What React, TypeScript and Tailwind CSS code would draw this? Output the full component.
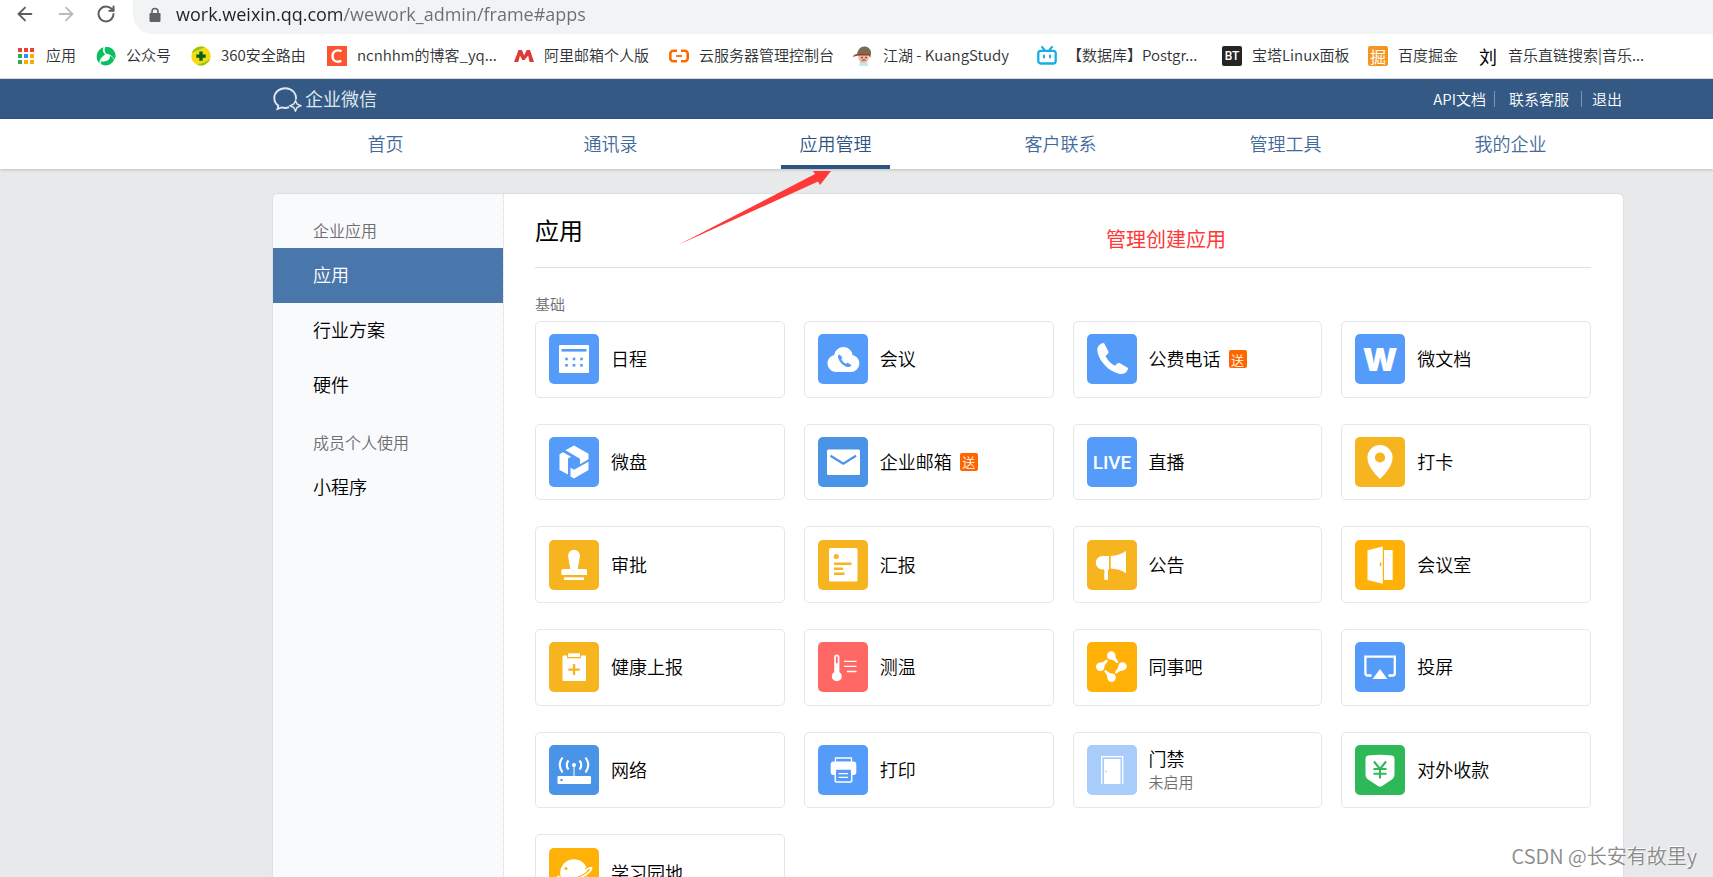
import type { ReactNode } from "react";
import { ArrowLeft, ArrowRight, RotateCw } from "lucide-react";

const BLUE = "#559cfa";
const DEEP = "#4a94e8";
const GOLD = "#f6b51e";
const AMBER = "#ffb107";

function Tile({ bg, children }: { bg: string; children: ReactNode }) {
  return (
    <svg viewBox="0 0 50 50" className="size-[50px] shrink-0" fill="#fff" aria-hidden="true">
      <rect width="50" height="50" rx="5" fill={bg} />
      {children}
    </svg>
  );
}

const icons: Record<string, ReactNode> = {
  calendar: (
    <Tile bg={BLUE}>
      <rect x="10" y="11" width="30" height="28" rx="1" />
      <rect x="12.5" y="15" width="25" height="2.6" fill={BLUE} />
      {[17.5, 25, 32.5].map((x) => (
        <g key={x} fill={BLUE}>
          <rect x={x - 1.3} y="23.7" width="2.6" height="2.6" />
          <rect x={x - 1.3} y="30" width="2.6" height="2.6" />
        </g>
      ))}
    </Tile>
  ),
  meeting: (
    <Tile bg={BLUE}>
      <path d="M18 38a8.6 8.6 0 0 1-1.8-17 9.3 9.3 0 0 1 18.4 0A8.6 8.6 0 0 1 33 38z" />
      <path
        d="M21.6 20.4c-1.4.4-2 1.7-1.4 3.6 1.3 4.2 5 8 9.3 9 2 .3 3.4-.5 3.8-2l-3.6-2.3-2 1c-2-.9-3.6-2.6-4.3-4.6l1-1.5z"
        fill={BLUE}
      />
    </Tile>
  ),
  phone: (
    <Tile bg={BLUE}>
      <path d="M16 9c-3.6 1-5.900 4-5.700 7.400C11.500 27 23 38.800 34 39.900c3.500.2 6-1.600 7-4.900.1-.6 0-1-.4-1.300L33 29.200c-1-.5-2-.4-2.800.4L28 31.800c-4-2-7.700-5.700-9.400-9.800l2.200-2.200c.8-.9.900-1.900.4-2.900L17.300 9.500c-.3-.5-.7-.7-1.300-.5z" />
    </Tile>
  ),
  doc: (
    <Tile bg={BLUE}>
      <text x="25" y="36.5" textAnchor="middle" className="font-['Inter',sans-serif] text-[32px] font-black">
        W
      </text>
    </Tile>
  ),
  drive: (
    <Tile bg={BLUE}>
      <path d="M16.500 13.300 25 8.500l14.500 8.300v5.400L31 27.200v-5.500z" />
      <path d="m14 15.200 8 4.600-3 1.800v16L10.500 33V17.300z" />
      <path d="m39.500 24.800v8.200L25 41.500l-3.500-2v-8.700l3.500 2z" />
    </Tile>
  ),
  mail: (
    <Tile bg={DEEP}>
      <rect x="9" y="12.5" width="33" height="25.5" rx="1.5" />
      <path d="m12.500 18.700 12.800 8 12.700-8" fill="none" stroke={DEEP} strokeWidth="2.2" />
    </Tile>
  ),
  live: (
    <Tile bg={BLUE}>
      <text x="25" y="32" textAnchor="middle" className="font-['Roboto',sans-serif] text-[19px] font-medium">
        LIVE
      </text>
    </Tile>
  ),
  pin: (
    <Tile bg={GOLD}>
      <path
        fillRule="evenodd"
        d="M25 8a12.600 12.600 0 0 0-12.600 12.600C12.400 29 20 37 25 42c5-5 12.600-13 12.600-21.400A12.600 12.600 0 0 0 25 8zm0 7.400a5.100 5.100 0 1 1 0 10.200 5.100 5.100 0 0 1 0-10.200z"
      />
    </Tile>
  ),
  stamp: (
    <Tile bg={GOLD}>
      <path d="M25 9.700a6 6 0 0 0-5.900 6.600L21.300 29H14a1.600 1.600 0 0 0-1.600 1.600V35H38v-4.400a1.600 1.600 0 0 0-1.600-1.600h-7.700l2.200-12.700A6 6 0 0 0 25 9.700z" />
      <rect x="15" y="37.3" width="20" height="2.7" />
    </Tile>
  ),
  report: (
    <Tile bg={GOLD}>
      <rect x="11" y="8" width="28.5" height="33.5" rx="1.5" />
      <g fill={GOLD}>
        <circle cx="18.3" cy="16.6" r="2.5" />
        <rect x="16" y="22.5" width="17.5" height="2.5" />
        <rect x="16" y="27.5" width="9" height="2.5" />
        <rect x="16" y="32.5" width="10.5" height="2.5" />
      </g>
    </Tile>
  ),
  horn: (
    <Tile bg={GOLD}>
      <path d="M22 16h-6.500a6.800 6.800 0 0 0 0 13.600H17.300V39a1 1 0 0 0 1 1H20a1 1 0 0 0 1-1v-9.400h1z" />
      <path d="M23.700 16c6-.3 11-2 15.300-5v22.200c-4.300-3-9.300-4.300-15.300-4.600z" />
    </Tile>
  ),
  room: (
    <Tile bg={AMBER}>
      <path d="m12.500 10.300 15.300-3.900v37.400L12.500 40z" />
      <path d="M29 10h8.700v30H29z" />
      <rect x="24.8" y="22.5" width="1.5" height="4" rx=".7" fill={AMBER} />
    </Tile>
  ),
  health: (
    <Tile bg={GOLD}>
      <rect x="13.5" y="13.5" width="23.5" height="25.5" rx="1" />
      <rect x="18" y="10.5" width="14" height="5.8" fill={GOLD} />
      <rect x="19" y="11.3" width="12" height="3.7" />
      <path d="M23.900 22h2.300v4.400h4.500v2.300h-4.500V33h-2.300v-4.300h-4.500v-2.300h4.500z" fill={GOLD} />
    </Tile>
  ),
  thermo: (
    <Tile bg="#ff6765">
      <path d="M16.200 30V15a2.600 2.600 0 0 1 5.200 0v15a5 5 0 1 1-5.200 0z" />
      <rect x="17.9" y="14.5" width="1.8" height="6.8" fill="#ff6765" />
      <path d="M26 19.400h12.500M26 24.400h12.500M29 29.500h9.500" stroke="#fff" strokeWidth="1.3" />
    </Tile>
  ),
  circle: (
    <Tile bg={AMBER}>
      {[0, 90, 180, 270].map((a) => (
        <path
          key={a}
          transform={`rotate(${a} 24.4 24.6)`}
          d="M20 13.400a4.200 4.200 0 0 1 8.400 0c0 2 .8 3.500 2.600 5.600a1.200 1.200 0 0 1-1.700 1.700c-1.900-1.700-3.200-2.600-5.200-3.100a4.200 4.200 0 0 1-4.100-4.200z"
        />
      ))}
    </Tile>
  ),
  cast: (
    <Tile bg={BLUE}>
      <path
        d="M16.500 33.500h-4A2 2 0 0 1 10.400 31.500V14.700h29.400v16.800a2 2 0 0 1-2 2h-4.300"
        fill="none"
        stroke="#fff"
        strokeWidth="2.3"
      />
      <path d="m25 27 7.300 10H17.700z" />
    </Tile>
  ),
  router: (
    <Tile bg={DEEP}>
      <rect x="8.5" y="31" width="33.5" height="8" rx="1.2" />
      <circle cx="12.5" cy="35" r="1.2" fill={DEEP} />
      <circle cx="25" cy="20" r="2" />
      <path d="M25 21v10" stroke="#fff" strokeWidth="1" />
      <path
        d="M13.500 12.500q-5.500 7.500 0 15M19.500 15.500q-3.500 4.500 0 9M30.500 15.500q3.500 4.500 0 9M36.500 12.500q5.500 7.500 0 15"
        fill="none"
        stroke="#fff"
        strokeWidth="2.1"
      />
    </Tile>
  ),
  printer: (
    <Tile bg={BLUE}>
      <path d="M17.500 17v-4h16v4" fill="none" stroke="#fff" strokeWidth="1.3" />
      <path d="M15.500 16.400h20a2.800 2.800 0 0 1 2.800 2.800v8a2.800 2.800 0 0 1-2.800 2.800h-20a2.800 2.800 0 0 1-2.800-2.800v-8a2.800 2.800 0 0 1 2.800-2.800z" />
      <rect x="17.3" y="24" width="16.4" height="13" rx="1" fill={BLUE} stroke="#fff" strokeWidth="1.5" />
      <path d="M20.500 28.700h9.500M20.500 32.300h9.500" stroke="#fff" strokeWidth="1.2" />
    </Tile>
  ),
  door: (
    <Tile bg="#a9cdfb">
      <path d="M14.700 39V11.600h21V39" fill="none" stroke="#fff" strokeWidth="1.3" />
      <rect x="17" y="14" width="16.5" height="25" />
      <rect x="18.5" y="25.5" width="1.2" height="1.8" fill="#a9cdfb" />
    </Tile>
  ),
  pay: (
    <Tile bg="#2fb857">
      <path d="M13 10.600c8-1.300 16-1.300 24 0a3 3 0 0 1 2.500 3V29c0 3-1.200 4.300-3 5.700l-9.300 6.300c-1.600 1-2.600 1-4.200 0l-9.500-6.300c-1.800-1.400-3-2.700-3-5.700V13.600a3 3 0 0 1 2.500-3z" />
      <path d="m19 16.500 6 7.500 6-7.500M25 24v9.500M18.500 24h13M18.500 28.700h13" fill="none" stroke="#2fb857" strokeWidth="2.1" />
    </Tile>
  ),
  planet: (
    <Tile bg={AMBER}>
      <circle cx="25" cy="25" r="13.8" />
      <circle cx="17" cy="20.5" r="1.5" fill={AMBER} />
      <path d="M37 22c4-2.500 6-3 5.500-1.500-1.500 5-12 11-22 12.500-9 1.300-14 0-13.500-2 .3-1 1.500-2 3.500-3" fill="none" stroke={AMBER} strokeWidth="4" />
      <path d="M37 22c4-2.500 6-3 5.500-1.500-1.500 5-12 11-22 12.500-9 1.300-14 0-13.500-2 .3-1 1.500-2 3.500-3" fill="none" stroke="#fff" strokeWidth="1.6" />
    </Tile>
  ),
};

const apps: { name: string; icon: string; gift?: boolean; note?: string }[] = [
  { name: "日程", icon: "calendar" },
  { name: "会议", icon: "meeting" },
  { name: "公费电话", icon: "phone", gift: true },
  { name: "微文档", icon: "doc" },
  { name: "微盘", icon: "drive" },
  { name: "企业邮箱", icon: "mail", gift: true },
  { name: "直播", icon: "live" },
  { name: "打卡", icon: "pin" },
  { name: "审批", icon: "stamp" },
  { name: "汇报", icon: "report" },
  { name: "公告", icon: "horn" },
  { name: "会议室", icon: "room" },
  { name: "健康上报", icon: "health" },
  { name: "测温", icon: "thermo" },
  { name: "同事吧", icon: "circle" },
  { name: "投屏", icon: "cast" },
  { name: "网络", icon: "router" },
  { name: "打印", icon: "printer" },
  { name: "门禁", icon: "door", note: "未启用" },
  { name: "对外收款", icon: "pay" },
  { name: "学习园地", icon: "planet" },
];

function Fav({ children }: { children: ReactNode }) {
  return (
    <svg viewBox="0 0 20 20" className="size-5 shrink-0" aria-hidden="true">
      {children}
    </svg>
  );
}

const bookmarks: { label: string; width: string; icon: ReactNode }[] = [
  {
    label: "应用",
    width: "w-[80px]",
    icon: (
      <Fav>
        {["#ea4335", "#ea4335", "#ea4335", "#34a853", "#4285f4", "#fbab05", "#34a853", "#fbab05", "#fbab05"].map((c, i) => (
          <rect key={i} x={2 + (i % 3) * 6} y={2 + Math.floor(i / 3) * 6} width="4" height="4" fill={c} />
        ))}
      </Fav>
    ),
  },
  {
    label: "公众号",
    width: "w-[95px]",
    icon: (
      <Fav>
        <g fill="#07c160">
          <path d="M7.500 1.200C2.500 3 .2 7.500.8 12.200c.3 2 1.200 3.600 2.600 5 .2-3.700 1.600-6.200 5.800-8.700C6.800 6 6.300 4 7.500 1.200z" />
          <path d="M9.200 1.100C13.800.2 18 3 19.200 7.300c.6 2.300.4 4.300-.7 6.200-1.900-3.300-4.400-5-8.600-5.900C8.600 5.500 8.300 3.300 9.200 1.100z" />
          <path d="M4.700 18c3.800 2.300 8.500 1.700 11.500-1.200 1-1 1.600-2 1.800-3-1-1.900-2.200-3.200-4-4 .2 3.500-1.800 5.900-8.700 5.700-.4.700-.6 1.500-.6 2.500z" />
        </g>
      </Fav>
    ),
  },
  {
    label: "360安全路由",
    width: "w-[136px]",
    icon: (
      <Fav>
        <circle cx="10" cy="10" r="9.7" fill="#f5dc10" />
        <path d="M1 7A9.700 9.700 0 0 1 14 1.200C9 3 5 5 1 7zM19 13A9.700 9.700 0 0 1 6 18.800c5-1.200 9-3 13-5.800z" fill="#8cc91c" />
        <path d="M8.300 5.500h3.400v3h3v3.200h-3v3H8.300v-3h-3V8.500h3z" fill="#075e20" />
      </Fav>
    ),
  },
  {
    label: "ncnhhm的博客_yq...",
    width: "w-[187px]",
    icon: (
      <Fav>
        <rect width="20" height="20" fill="#fc5531" />
        <path d="M14.500 5.300c-4.500-2.300-9-.2-9 4.700s4 7 8.800 4.900" fill="none" stroke="#fff" strokeWidth="2.3" />
      </Fav>
    ),
  },
  {
    label: "阿里邮箱个人版",
    width: "w-[155px]",
    icon: (
      <Fav>
        <path d="M0 16 4.500 4h3.300l2.300 5.500L12.700 4H16l4 12h-4.500l-1.300-6.500L10.500 14H8.300L6 9.500 4.300 16z" fill="#dd3a35" />
      </Fav>
    ),
  },
  {
    label: "云服务器管理控制台",
    width: "w-[184px]",
    icon: (
      <Fav>
        <g fill="none" stroke="#ff6a00" strokeWidth="2.6">
          <path d="M8 4.800H4.300a3 3 0 0 0-3 3v4.400a3 3 0 0 0 3 3H8M12 4.800h3.700a3 3 0 0 1 3 3v4.400a3 3 0 0 1-3 3H12" />
          <path d="M7 10h6" strokeWidth="1.8" />
        </g>
      </Fav>
    ),
  },
  {
    label: "江湖 - KuangStudy",
    width: "w-[184px]",
    icon: (
      <Fav>
        <path d="M7 15h7l1 5H6z" fill="#bfe9f5" />
        <circle cx="10.5" cy="11.5" r="5.2" fill="#f2b596" />
        <path d="M4 8c1-5 4-8 8-7.500S18.500 4 18 8l-.8 4-2-3.500H8L0 11C0 9 2 8.300 4 8z" fill="#7c6a52" />
        <path d="M4 8h13v1.500H3z" fill="#963c32" />
        <circle cx="9" cy="11.5" r=".8" fill="#333" />
        <circle cx="13" cy="11.5" r=".8" fill="#333" />
        <path d="M9 14h3.500" stroke="#a03030" />
      </Fav>
    ),
  },
  {
    label: "【数据库】Postgr...",
    width: "w-[185px]",
    icon: (
      <Fav>
        <rect x="1.3" y="4.8" width="17.4" height="12.7" rx="2.5" fill="none" stroke="#18aee5" strokeWidth="2.3" />
        <path d="m5 1 2.500 3M15 1l-2.500 3M7 9.500v2M13 9.500v2" stroke="#18aee5" strokeWidth="2" strokeLinecap="round" />
      </Fav>
    ),
  },
  {
    label: "宝塔Linux面板",
    width: "w-[146px]",
    icon: (
      <span className="grid size-5 shrink-0 place-items-center rounded-[2px] bg-[#252525] font-['Roboto',sans-serif] text-[12px] leading-none font-medium text-white">
        BT
      </span>
    ),
  },
  {
    label: "百度掘金",
    width: "w-[110px]",
    icon: (
      <span className="grid size-5 shrink-0 place-items-center rounded-[2px] bg-[#f7941d] text-[16px] leading-none font-normal text-white">
        掘
      </span>
    ),
  },
  {
    label: "音乐直链搜索|音乐...",
    width: "w-[170px]",
    icon: <span className="grid size-5 shrink-0 place-items-center text-[18px] leading-none font-normal text-black">刘</span>,
  },
];

const tabs = ["首页", "通讯录", "应用管理", "客户联系", "管理工具", "我的企业"];

function SideLink({ label, active }: { label: string; active?: boolean }) {
  return (
    <a
      href="#"
      className={
        active
          ? "flex h-[55px] items-center bg-[#4a77ab] pb-0.5 pl-10 text-[18px] text-white"
          : "flex h-[55px] items-center pb-0.5 pl-10 text-[18px] text-black"
      }
    >
      {label}
    </a>
  );
}

export default function App() {
  return (
    <div className="relative flex h-screen flex-col overflow-hidden bg-[#e7e9eb] font-['Noto_Sans_CJK_SC',sans-serif] font-[350]">
      <div className="flex h-[34px] shrink-0 items-start bg-white">
        <div className="flex h-[28px] w-[133px] shrink-0 items-center gap-[19px] pl-[14px] text-[#5a5d61]">
          <button type="button" aria-label="后退">
            <ArrowLeft className="size-[22px]" strokeWidth={2} />
          </button>
          <button type="button" aria-label="前进" className="text-[#b9bbbe]">
            <ArrowRight className="size-[22px]" strokeWidth={2} />
          </button>
          <button type="button" aria-label="刷新">
            <RotateCw className="size-5" strokeWidth={2.4} />
          </button>
        </div>
        <div className="flex h-[34px] flex-1 items-start gap-[15px] rounded-bl-[20px] bg-[#f1f3f4] pl-4">
          <svg viewBox="0 0 12 16" className="mt-[7px] h-4 w-3 shrink-0" aria-hidden="true">
            <path d="M3 7V4.500a3 3 0 0 1 6 0V7" fill="none" stroke="#5f6368" strokeWidth="1.6" />
            <rect x=".5" y="6" width="11" height="9" rx="1.2" fill="#5f6368" />
          </svg>
          <input
            aria-label="地址"
            defaultValue="work.weixin.qq.com/wework_admin/frame#apps"
            className="h-[28px] flex-1 bg-[linear-gradient(90deg,#202124_166px,#6a6e72_166px)] bg-clip-text font-['Open_Sans',sans-serif] text-[18px] font-normal text-transparent outline-none"
          />
        </div>
      </div>

      <div className="flex h-[45px] shrink-0 items-center overflow-hidden border-b border-[#d9dcda] bg-white pl-4 text-[15px] text-[#303236]">
        {bookmarks.map((b) => (
          <a key={b.label} href="#" className={`flex shrink-0 items-center gap-[10px] whitespace-nowrap ${b.width}`}>
            {b.icon}
            <span className="pb-0.5">{b.label}</span>
          </a>
        ))}
      </div>

      <header className="shrink-0 bg-[#335984] pl-[183px]">
        <div className="mx-auto flex h-10 max-w-[1350px] items-center justify-between pr-px text-[15px] text-white">
          <a href="#" className="flex items-center gap-[3px] text-[18px] font-normal text-[#dfe6ee]">
            <svg viewBox="0 0 29 25" className="h-[25px] w-[29px]" fill="none" stroke="#dfe6ee" aria-hidden="true">
              <path
                d="M23 12.500C23.500 6 18.700 1.200 12.300 1.200 6 1.200 1.300 5.500 1.300 11c0 3.200 1.500 5.900 4 7.600L4.500 22l4-1.600c2.700.8 5.300.7 7.700-.3"
                strokeWidth="1.9"
              />
              <path d="m22.500 13.700 1.500 3.300 3.800 1.700-3.800 1.800-1.500 3.500-1.700-3.500-3.600-1.800 3.600-1.700z" strokeWidth="1.5" />
            </svg>
            <span className="pb-0.5">企业微信</span>
          </a>
          <nav className="flex items-center">
            <a href="#">API文档</a>
            <span className="ml-2 h-4 w-px bg-[#7d96b3]" />
            <a href="#" className="ml-[14px]">
              联系客服
            </a>
            <span className="ml-3 h-4 w-px bg-[#7d96b3]" />
            <a href="#" className="ml-[10px]">
              退出
            </a>
          </nav>
        </div>
      </header>

      <nav className="z-10 shrink-0 bg-white pl-[183px] shadow-[0_1px_3px_rgba(0,0,0,0.18)]">
        <div className="mx-auto grid h-[50px] max-w-[1350px] grid-cols-6">
          {tabs.map((t) =>
            t === "应用管理" ? (
              <a
                key={t}
                href="#"
                className="mx-auto flex w-[109px] items-center justify-center border-b-4 border-[#2d5584] pt-0.5 text-[18px] text-[#2d5584]"
              >
                {t}
              </a>
            ) : (
              <a key={t} href="#" className="flex items-center justify-center pb-0.5 text-[18px] text-[#426a9a]">
                {t}
              </a>
            ),
          )}
        </div>
      </nav>

      <div className="flex flex-1 shrink-0 pt-[25px] pl-[183px]">
        <div className="mx-auto flex w-full max-w-[1350px] rounded-t-[5px] bg-white shadow-[0_0_2px_rgba(0,0,0,0.15)]">
          <aside className="w-[231px] shrink-0 rounded-tl-[5px] border-r border-dotted border-[#d3d6da] bg-[#f9fafc] pt-[21px]">
            <h2 className="flex h-[33px] items-center pb-1 pl-10 text-[16px] text-[#6e6e6e]">企业应用</h2>
            <SideLink label="应用" active />
            <SideLink label="行业方案" />
            <SideLink label="硬件" />
            <h2 className="mt-[14px] flex h-[33px] items-center pb-1 pl-10 text-[16px] text-[#6e6e6e]">成员个人使用</h2>
            <SideLink label="小程序" />
          </aside>

          <main className="relative min-w-0 flex-1 pr-8 pl-[31px]">
            <h1 className="flex h-[74px] items-center border-b border-[#dcdee0] pb-0.5 text-[24px] font-normal text-black">应用</h1>
            <h2 className="mt-[24px] mb-[6px] text-[15px] leading-[23px] text-[#6e6e6e]">基础</h2>
            <div className="grid min-h-[590px] auto-rows-fr grid-cols-4 gap-x-[19px] gap-y-[26px]">
              {apps.map((a) => (
                <a
                  key={a.name}
                  href="#"
                  className="flex items-center gap-3 rounded-[5px] border border-[#e4e6e9] px-[13px] text-[18px] leading-[26px] text-black"
                >
                  {icons[a.icon]}
                  <span className="flex flex-col pb-0.5">
                    {a.name}
                    {a.note && <span className="text-[15px] leading-[22px] text-[#6e6e6e]">{a.note}</span>}
                  </span>
                  {a.gift && (
                    <span className="-ml-1 grid size-[18px] place-items-center rounded-[2px] bg-[#ff6600] text-[13px] leading-none text-white">
                      送
                    </span>
                  )}
                </a>
              ))}
            </div>
            <p className="absolute top-[30px] left-[602px] text-[20px] leading-[30px] font-normal text-[#ff3838]">管理创建应用</p>
            <svg viewBox="0 0 152 74" className="absolute -top-[23px] left-[175px] z-20 h-[74px] w-[152px]" aria-hidden="true">
              <path d="M0 73.500 136 3l-2-3h18l-11 14-2-3.500z" fill="#ff3838" />
            </svg>
          </main>
        </div>
      </div>

      <div className="absolute right-4 bottom-1 z-30 text-[20px] leading-[34px] text-[#8b8b8b] [text-shadow:-1px_-1px_0_#fff]">
        CSDN @长安有故里y
      </div>
    </div>
  );
}
